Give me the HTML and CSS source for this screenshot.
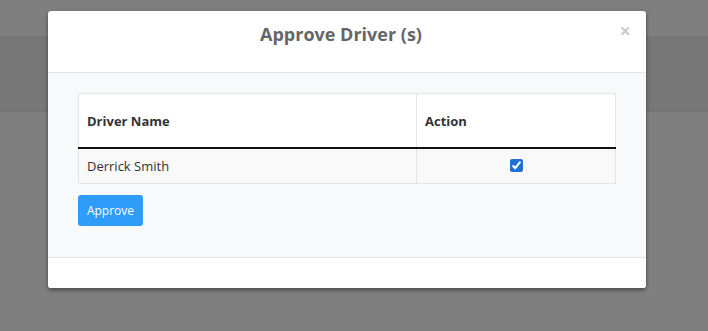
FILE: index.html
```html
<!DOCTYPE html>
<html>
<head>
	<title>Approve Driver</title>
	<meta charset="utf-8">
	<link rel="stylesheet" href="styles.css">
</head>
<body>
	<div class="page">
		<div class="page-top"></div>
		<div class="page-band"></div>
		<div class="page-rest"></div>
	</div>
	<div class="modal">
		<div class="modal-header">
			<h4 class="modal-title">Approve Driver (s)</h4>
			<span class="close">&times;</span>
		</div>
		<div class="modal-body">
			<table class="driver-table">
				<thead>
					<tr>
						<th class="col-name">Driver Name</th>
						<th>Action</th>
					</tr>
				</thead>
				<tbody>
					<tr>
						<td>Derrick Smith</td>
						<td class="center"><input type="checkbox" checked></td>
					</tr>
				</tbody>
			</table>
			<button class="btn-approve">Approve</button>
		</div>
		<div class="modal-footer"></div>
	</div>
</body>
</html>
```
FILE: styles.css
```css
body {
	margin:0;
	font-family:"Open Sans","Liberation Sans",sans-serif;
	background:#7f7f7f;
	overflow:hidden;
}
.page-top {
	height:36px;
	background:#7f7f7f;
}
.page-band {
	height:74px;
	background:#777;
	border-bottom:2px solid #737373;
}
.modal {
	position:absolute;
	top:11px;
	left:48px;
	width:598px;
	background:#fff;
	border-radius:3px;
	box-shadow:0 2px 4px rgba(0,0,0,0.45);
	overflow:hidden;
}
.modal-header {
	position:relative;
	height:62px;
	border-bottom:1px solid #e5e5e5;
	box-sizing:border-box;
	text-align:center;
	padding-right:12px;
}
.modal-title {
	margin:0;
	padding-top:10px;
	font-size:18px;
	font-weight:700;
	color:#666;
	line-height:26px;
}
.close {
	position:absolute;
	top:6px;
	right:15px;
	font-size:20px;
	font-weight:700;
	color:#ccc;
}
.modal-body {
	background:#f8f9fa;
	padding:20px 30px 31px;
}
.driver-table {
	width:100%;
	border-collapse:collapse;
	font-size:13px;
	color:#333;
	border:1px solid #e5e5e5;
}
.driver-table th {
	text-align:left;
	font-weight:700;
	height:54px;
	padding:0 8px;
	background:#fff;
	border-right:1px solid #e5e5e5;
	border-bottom:2px solid #111;
	box-sizing:border-box;
	padding-top:2px;
}
.driver-table .col-name {
	width:338px;
}
.driver-table td {
	height:36px;
	padding:0 8px;
	background:#f9f9f9;
	border-right:1px solid #e5e5e5;
	box-sizing:border-box;
}
.driver-table .center {
	text-align:center;
}
.driver-table input {
	margin:4px 0 0;
	width:13px;
	height:13px;
	accent-color:#1f6fd6;
}
.btn-approve {
	display:block;
	margin-top:11px;
	width:65px;
	height:31px;
	border:none;
	border-radius:3px;
	background:#2e9cf8;
	color:#fff;
	font-family:"Open Sans","Liberation Sans",sans-serif;
	font-size:12px;
	padding:0;
}
.modal-footer {
	height:30px;
	border-top:1px solid #e5e5e5;
	background:#fff;
}
```
